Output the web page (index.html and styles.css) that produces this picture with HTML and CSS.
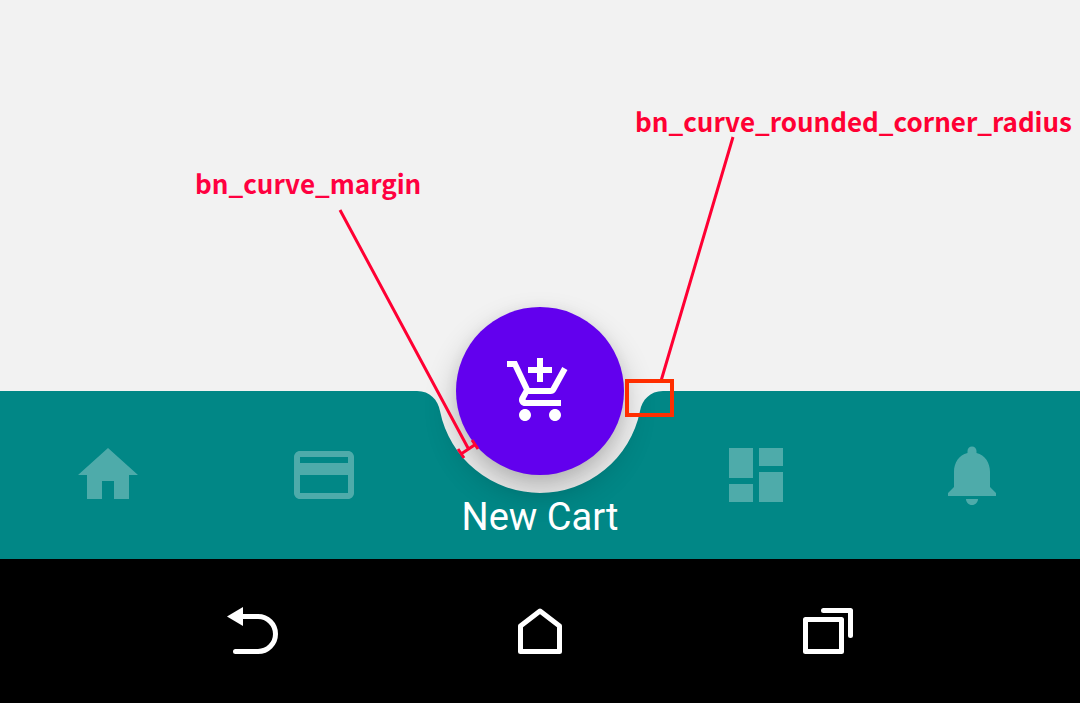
FILE: index.html
```html
<!DOCTYPE html>
<html lang="en">
<head>
<meta charset="utf-8">
<meta name="viewport" content="width=device-width, initial-scale=1">
<title>Curved bottom navigation</title>
<link rel="stylesheet" href="styles.css">
</head>
<body>
<div class="screen">
  <main class="content"></main>

  <nav class="bottom-nav" aria-label="Main">
    <div class="bar-shape" aria-hidden="true">
      <span class="bar-fill"></span>
      <svg class="bar-curve" viewBox="0 0 264 168"><path d="M0 0H9C22 0 30 9 32 20A102 102 0 0 0 232 20C234 9 242 0 255 0H264V168H0Z"/></svg>
      <span class="bar-fill"></span>
    </div>
    <button class="nav-item" type="button" aria-label="Home">
      <svg class="icon" viewBox="0 0 24 24"><path d="M10 20v-6h4v6h5v-8h3L12 3 2 12h3v8z"/></svg>
    </button>
    <button class="nav-item" type="button" aria-label="Payment">
      <svg class="icon" viewBox="0 0 24 24"><path d="M20 4H4c-1.110 0-1.990.890-1.990 2L2 18c0 1.110.890 2 2 2h16c1.110 0 2-.890 2-2V6c0-1.110-.890-2-2-2zm0 14H4v-6h16v6zm0-10H4V6h16v2z"/></svg>
    </button>
    <button class="nav-item nav-item-active" type="button">
      <span class="fab">
        <svg class="icon" viewBox="0 0 24 24" aria-hidden="true"><path d="M11 9h2V6h3V4h-3V1h-2v3H8v2h3v3zm-4 9c-1.100 0-1.990.900-1.990 2S5.900 22 7 22s2-.900 2-2-.900-2-2-2zm10 0c-1.100 0-1.990.900-1.990 2s.890 2 1.990 2 2-.900 2-2-.900-2-2-2zm-9.830-3.250l.030-.120.900-1.630h7.450c.750 0 1.410-.410 1.750-1.030l3.860-7.010L19.420 4h-.010l-1.100 2-2.760 5H8.530l-.130-.270L6.160 6l-.950-2-.940-2H1v2h2l3.600 7.590-1.350 2.450c-.160.280-.250.610-.250.960 0 1.100.900 2 2 2h12v-2H7.420c-.130 0-.250-.110-.250-.250z"/></svg>
      </span>
      <span class="nav-label">New Cart</span>
    </button>
    <button class="nav-item" type="button" aria-label="Dashboard">
      <svg class="icon" viewBox="0 0 24 24"><path d="M3 13h8V3H3v10zm0 8h8v-6H3v6zm10 0h8V11h-8v10zm0-18v6h8V3h-8z"/></svg>
    </button>
    <button class="nav-item" type="button" aria-label="Notifications">
      <svg class="icon" viewBox="0 0 24 24"><path d="M12 22c1.100 0 2-.900 2-2h-4c0 1.100.890 2 2 2zm6-6v-5c0-3.070-1.640-5.640-4.500-6.320V4c0-.830-.670-1.500-1.500-1.500s-1.500.670-1.500 1.500v.680C7.630 5.360 6 7.920 6 11v5l-2 2v1h16v-1l-2-2z"/></svg>
    </button>
  </nav>

  <div class="system-bar">
    <button class="system-button" type="button" aria-label="Back">
      <svg class="system-icon" viewBox="0 0 60 60"><path class="solid" d="M5 15.500L21 6V25Z"/><path d="M20 15.500H36A17.500 17.500 0 0 1 36 50.500H13.500"/></svg>
    </button>
    <button class="system-button" type="button" aria-label="Home screen">
      <svg class="system-icon" viewBox="0 0 60 60"><path d="M10.500 50.500V25L30 10L49.500 25V50.500Z"/></svg>
    </button>
    <button class="system-button" type="button" aria-label="Recent apps">
      <svg class="system-icon" viewBox="0 0 60 60"><path d="M7.500 18.500H43.500V50.500H7.500ZM25.500 9.500H52.500V34.500"/></svg>
    </button>
  </div>

  <div class="annotations">
    <svg class="annotation-lines" viewBox="0 0 1080 703" aria-hidden="true">
      <path d="M340 210L468 448M461 454L476 444M458 449L464 458M472 440L478 449M733 137L661 381"/>
      <rect x="627" y="381" width="45" height="34"/>
    </svg>
    <span class="annotation margin-note">bn_curve_margin</span>
    <span class="annotation radius-note">bn_curve_rounded_corner_radius</span>
  </div>
</div>
</body>
</html>
```

FILE: styles.css
```css
* {
  box-sizing: border-box;
}

body {
  margin: 0;
  background: #f2f2f2;
  font-family: Roboto, "Liberation Sans", sans-serif;
}

button {
  padding: 0;
  border: 0;
  background: none;
  color: inherit;
  font: inherit;
  cursor: pointer;
}

.screen {
  position: relative;
  display: flex;
  flex-direction: column;
  min-height: 100vh;
  overflow: hidden;
}

.content {
  flex: 1;
}

.bottom-nav {
  position: relative;
  display: grid;
  grid-template-columns: repeat(5, 1fr);
  height: 168px;
  color: #fff;
}

.bar-shape {
  position: absolute;
  inset: 0;
  display: flex;
}

.bar-fill {
  flex: 1;
  background: #018786;
}

.bar-curve {
  width: 264px;
  height: 168px;
  fill: #018786;
}

.nav-item {
  position: relative;
  display: flex;
  align-items: center;
  justify-content: center;
}

.icon {
  width: 72px;
  height: 72px;
  fill: currentColor;
}

.nav-item > .icon {
  opacity: 0.3;
}

.nav-item-active {
  flex-direction: column;
  justify-content: flex-start;
  gap: 20px;
  margin-top: -84px;
}

.fab {
  display: flex;
  align-items: center;
  justify-content: center;
  width: 168px;
  height: 168px;
  border-radius: 50%;
  background: #6200ee;
  box-shadow: 0 16px 32px rgb(0 0 0 / 24%), 0 2px 14px rgb(0 0 0 / 6%);
}

.nav-label {
  font-size: 38px;
  line-height: 44px;
  white-space: nowrap;
}

.system-bar {
  display: flex;
  align-items: center;
  justify-content: center;
  gap: 228px;
  height: 144px;
  background: #000;
}

.system-button {
  display: flex;
}

.system-icon {
  width: 60px;
  height: 60px;
  fill: none;
  stroke: #fff;
  stroke-width: 5;
  stroke-linecap: round;
  stroke-linejoin: round;
}

.system-icon .solid {
  fill: #fff;
  stroke: none;
}

.annotations {
  position: absolute;
  bottom: 0;
  left: 50%;
  width: 1080px;
  height: 703px;
  margin-left: -540px;
  pointer-events: none;
}

.annotation-lines {
  display: block;
  width: 100%;
  height: 100%;
  fill: none;
  stroke: #ff0033;
  stroke-width: 3;
}

.annotation-lines rect {
  stroke: #ff2e00;
  stroke-width: 4;
}

.annotation {
  position: absolute;
  color: #ff0033;
  font-family: "Noto Sans CJK JP", "Open Sans", sans-serif;
  font-size: 26px;
  font-weight: 700;
  line-height: 36px;
  white-space: nowrap;
}

.margin-note {
  top: 165px;
  left: 195px;
  color: #ff0040;
}

.radius-note {
  top: 103px;
  left: 635px;
}
```
